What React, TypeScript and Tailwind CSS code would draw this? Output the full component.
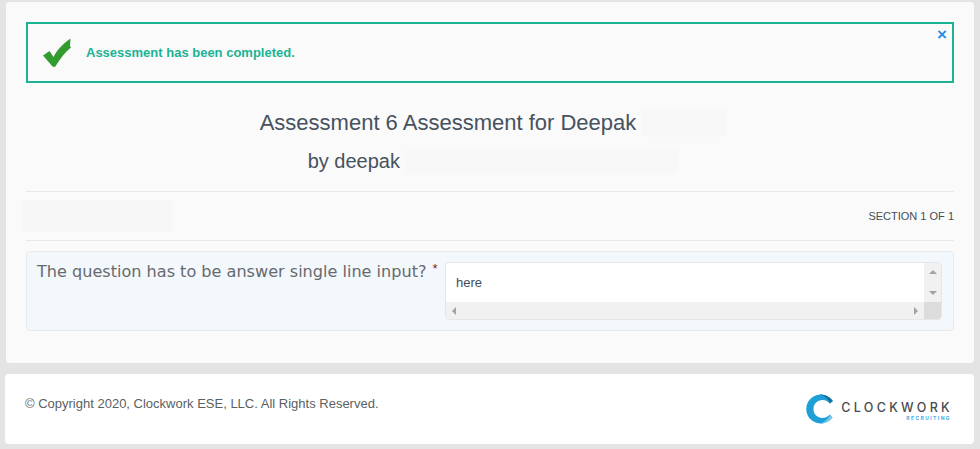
import React from 'react';

const arial = { fontFamily: '"Liberation Sans", Arial, sans-serif' };

function CheckMark() {
  return (
    <svg width="30" height="30" viewBox="0 0 30 30" className="shrink-0">
      <path d="M1 17.500 L7.500 13 L11.500 19 C15 12 20 6.500 28.500 0.500 L28 8 L29 9.500 C23 14 18.500 20.500 13 29 L10.500 28.500 Z" fill="#339b2f" />
    </svg>
  );
}

function ClockworkLogo() {
  return (
    <div className="flex items-center">
      <svg width="29" height="30" viewBox="0 0 29 30" className="shrink-0">
        <path d="M27.500 6.500 A14.500 14.500 0 1 0 27.500 23.500 L25 20.500 C22.500 23 20 24 17.500 24 C12.500 24 8.500 20.500 8.500 15 C8.500 9.500 12.500 6 17.500 6 C20 6 22.500 7 25 9.500 Z" fill="#1f9fd8" />
        <path d="M28 7 C24.500 2.500 19.500 0.500 14.500 0.500 C19.500 1.500 23 4.500 25 9.500 Z" fill="#156f98" />
        <path d="M27.500 23.500 C24.500 27.500 19.500 29.500 14.500 29.500 C19.500 28.500 23 25.500 25 20.500 Z" fill="#7cc9ea" />
      </svg>
      <div className="ml-[7px] flex flex-col items-end pt-[3px]" style={{ fontFamily: 'Inter, sans-serif' }}>
        <span className="text-[12.5px] leading-[13px] font-medium tracking-[3.3px] text-[#4a4a4e]">CLOCKWORK</span>
        <span className="mt-[1px] pr-[2px] text-[5px] leading-[6px] font-bold tracking-[1.4px] text-[#3fb0e6]">RECRUITING</span>
      </div>
    </div>
  );
}

export default function App() {
  return (
    <div className="h-[449px] overflow-hidden bg-[#e4e4e4] pt-[2px] pr-[6px] pl-[6px]" style={arial}>
      <div className="h-[361px] rounded-[4px] bg-[#fafafa] px-[20px] pt-[20px]">
        {/* Alert */}
        <div className="relative flex h-[61px] items-center border-2 border-[#1ab394] pl-[14px]">
          <CheckMark />
          <span className="ml-[14px] text-[13px] font-bold text-[#1ab394]">Assessment has been completed.</span>
          <span className="absolute top-[3px] right-[5px] text-[17px] leading-[16px] font-bold text-[#1e90e8]">×</span>
        </div>

        {/* Title */}
        <div className="mt-[24px] flex justify-center pl-[6px]">
          <div className="flex flex-col">
            <div className="flex h-[30px] items-center">
              <h1 className="text-[22px] text-[#46525e]">Assessment 6 Assessment for Deepak</h1>
              <div className="ml-[6px] h-[30px] w-[84px] bg-[#f8f8f8]" />
            </div>
            <div className="mt-[10px] flex h-[28px] items-center pl-[48px]">
              <span className="text-[20px] text-[#46525e]">by deepak</span>
              <div className="ml-[5px] h-[25px] w-[273px] bg-[#f8f8f8]" />
            </div>
          </div>
        </div>

        {/* Section bar */}
        <div className="mt-[16px] flex h-[50px] items-center justify-between border-y border-[#e9e9e9]">
          <div className="-ml-[5px] h-[32px] w-[151px] bg-[#f7f7f7]" />
          <span className="text-[11px] text-[#434e58]">SECTION 1 OF 1</span>
        </div>

        {/* Question */}
        <div className="mt-[10px] flex h-[80px] rounded-[4px] border border-[#e7eaec] bg-[#f3f8fd] pt-[10px] pr-[10px] pl-[10px]">
          <div className="flex w-[408px] items-start">
            <span className="text-[16.08px] leading-[20px] text-[#676a6c]" style={{ fontFamily: '"DejaVu Sans", sans-serif' }}>
              The question has to be answer single line input?
            </span>
            <span className="ml-[6px] text-[13px] leading-[14px] text-[#8b1a1a]">*</span>
          </div>
          <div className="flex h-[58px] w-[497px] flex-col overflow-hidden rounded-[4px] border border-[#e5e6e7] bg-white">
            <div className="flex flex-1">
              <div className="flex-1 pt-[11px] pl-[10px] text-[13px] leading-[18px] text-[#434e58]">here</div>
              <div className="flex w-[17px] flex-col items-center justify-between bg-[#f1f1f1] py-[7px]">
                <div className="h-0 w-0 border-x-[4px] border-b-[4px] border-x-transparent border-b-[#a3a3a3]" />
                <div className="h-0 w-0 border-x-[4px] border-t-[4px] border-x-transparent border-t-[#a3a3a3]" />
              </div>
            </div>
            <div className="flex h-[17px] items-center">
              <div className="flex h-full flex-1 items-center justify-between bg-[#f1f1f1] px-[6px]">
                <div className="h-0 w-0 border-y-[4px] border-r-[4px] border-y-transparent border-r-[#a3a3a3]" />
                <div className="h-0 w-0 border-y-[4px] border-l-[4px] border-y-transparent border-l-[#a3a3a3]" />
              </div>
              <div className="h-full w-[17px] bg-[#dcdcdc]" />
            </div>
          </div>
        </div>
      </div>

      {/* Footer */}
      <div className="mt-[11px] -ml-[1px] flex h-[70px] items-start justify-between rounded-[4px] bg-white pr-[21px] pl-[20px]">
        <span className="mt-[22px] text-[13px] leading-[16px] text-[#5b5f62]">© Copyright 2020, Clockwork ESE, LLC. All Rights Reserved.</span>
        <div className="mt-[20px]">
          <ClockworkLogo />
        </div>
      </div>
    </div>
  );
}
